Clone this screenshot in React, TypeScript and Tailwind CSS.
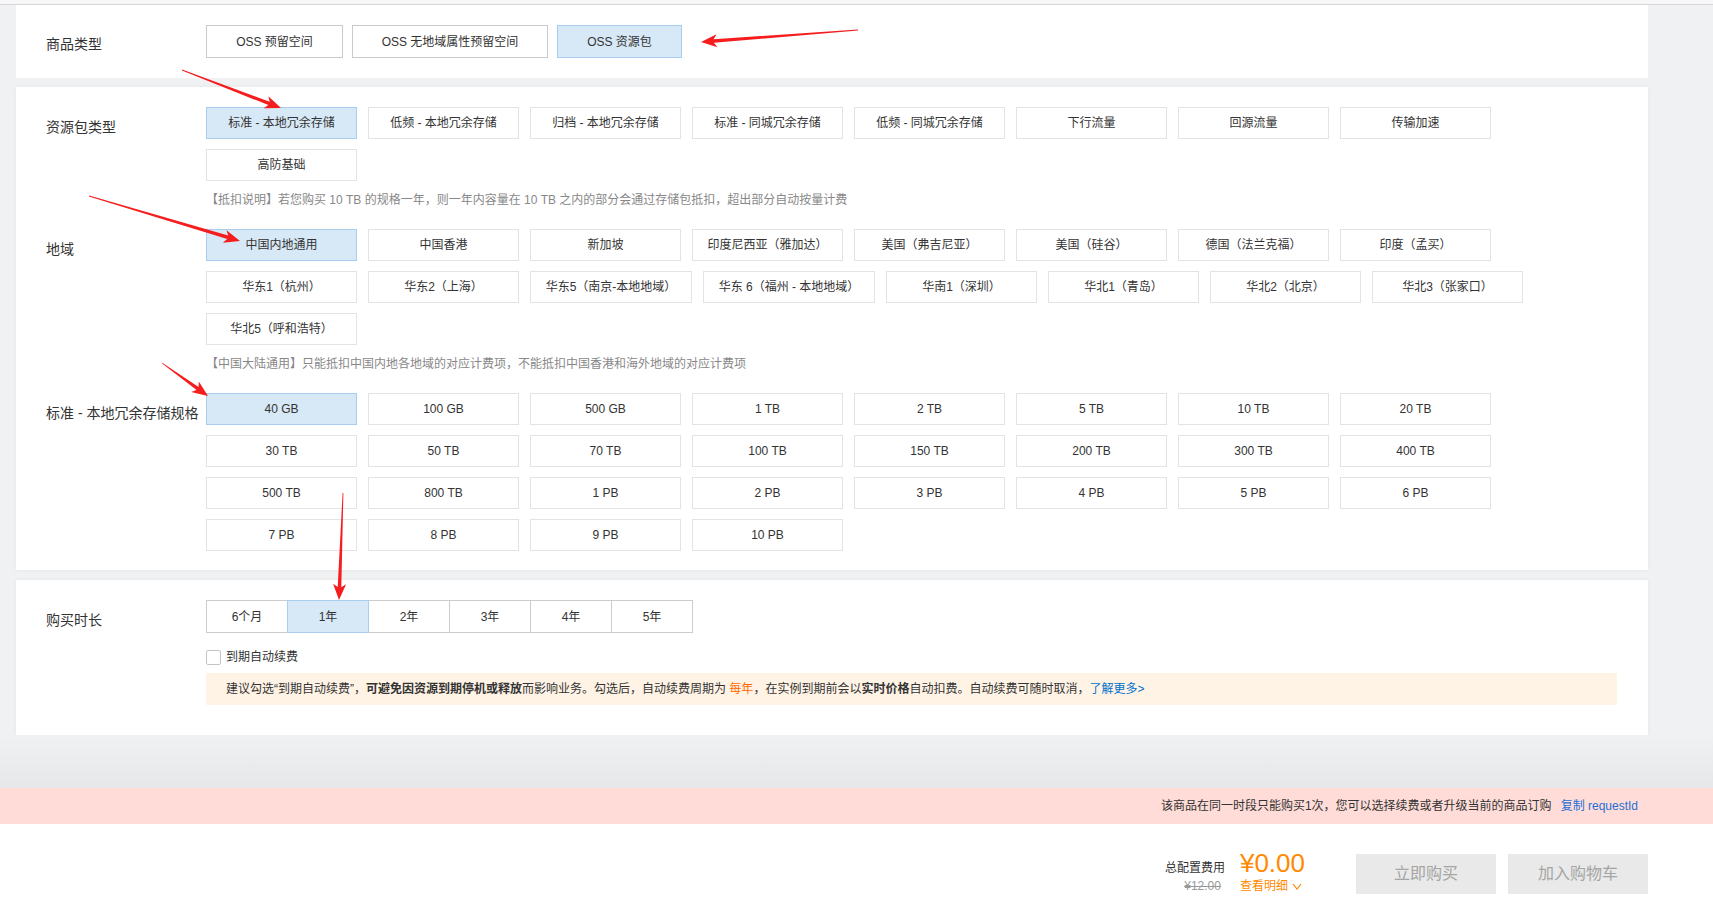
import React from "react";

type Opt = { label: string; w?: string; sel?: boolean };

const resTypes: Opt[] = [
  { label: "标准 - 本地冗余存储", sel: true },
  { label: "低频 - 本地冗余存储" },
  { label: "归档 - 本地冗余存储" },
  { label: "标准 - 同城冗余存储" },
  { label: "低频 - 同城冗余存储" },
  { label: "下行流量" },
  { label: "回源流量" },
  { label: "传输加速" },
  { label: "高防基础" },
];

const regions: Opt[] = [
  { label: "中国内地通用", sel: true },
  { label: "中国香港" },
  { label: "新加坡" },
  { label: "印度尼西亚（雅加达）" },
  { label: "美国（弗吉尼亚）" },
  { label: "美国（硅谷）" },
  { label: "德国（法兰克福）" },
  { label: "印度（孟买）" },
  { label: "华东1（杭州）" },
  { label: "华东2（上海）" },
  { label: "华东5（南京-本地地域）", w: "w-[162px]" },
  { label: "华东 6（福州 - 本地地域）", w: "w-[172px]" },
  { label: "华南1（深圳）" },
  { label: "华北1（青岛）" },
  { label: "华北2（北京）" },
  { label: "华北3（张家口）" },
  { label: "华北5（呼和浩特）" },
];

const specs: Opt[] = [
  "40 GB", "100 GB", "500 GB", "1 TB", "2 TB", "5 TB", "10 TB", "20 TB",
  "30 TB", "50 TB", "70 TB", "100 TB", "150 TB", "200 TB", "300 TB", "400 TB",
  "500 TB", "800 TB", "1 PB", "2 PB", "3 PB", "4 PB", "5 PB", "6 PB",
  "7 PB", "8 PB", "9 PB", "10 PB",
].map((l, i) => ({ label: l, sel: i === 0 }));

const durations = ["6个月", "1年", "2年", "3年", "4年", "5年"];

function OptionButton({ o }: { o: Opt }) {
  return (
    <div
      className={
        "h-[32px] shrink-0 flex items-center justify-center border text-[12px] text-[#333] whitespace-nowrap " +
        (o.w ? o.w : "w-[151px]") +
        " " +
        (o.sel ? "bg-[#d7e8f6] border-[#a8cdee]" : "bg-white border-[#e3e3e3]")
      }
    >
      {o.label}
    </div>
  );
}

function OptionGrid({ items }: { items: Opt[] }) {
  return (
    <div className="flex flex-wrap gap-x-[11px] gap-y-[10px]">
      {items.map((o) => (
        <OptionButton key={o.label} o={o} />
      ))}
    </div>
  );
}

function Label({ children }: { children: React.ReactNode }) {
  return (
    <div className="w-[160px] shrink-0 pt-[10px] text-[14px] leading-[20px] text-[#333] whitespace-nowrap">
      {children}
    </div>
  );
}

function Note({ children }: { children: React.ReactNode }) {
  return <div className="mt-[10px] text-[12px] leading-[18px] text-[#888]">{children}</div>;
}

function arrowPoints(x1: number, y1: number, x2: number, y2: number) {
  const headLen = 16;
  const headW = 6.5;
  const tailW = 0.4;
  const shaftW = 1.8;
  const dx = x2 - x1;
  const dy = y2 - y1;
  const L = Math.hypot(dx, dy);
  const ux = dx / L;
  const uy = dy / L;
  const nx = -uy;
  const ny = ux;
  const bx = x2 - ux * headLen;
  const by = y2 - uy * headLen;
  const ix = x2 - ux * headLen * 0.8;
  const iy = y2 - uy * headLen * 0.8;
  const p = (x: number, y: number) => `${x.toFixed(1)},${y.toFixed(1)}`;
  return [
    p(x1 + nx * tailW, y1 + ny * tailW),
    p(ix + nx * shaftW, iy + ny * shaftW),
    p(bx + nx * headW, by + ny * headW),
    p(x2, y2),
    p(bx - nx * headW, by - ny * headW),
    p(ix - nx * shaftW, iy - ny * shaftW),
    p(x1 - nx * tailW, y1 - ny * tailW),
  ].join(" ");
}

const arrows = [
  [858, 30, 701, 42],
  [182, 70, 281, 108],
  [89, 196, 240, 241],
  [162, 363, 208, 396],
  [343, 493, 339, 600],
];

export default function App() {
  return (
    <div className="relative w-full min-h-[904px] bg-[#f0f1f3] font-['Liberation_Sans','Noto_Sans_CJK_SC',sans-serif] overflow-hidden">
      <div className="h-[5px] bg-[#f7f7f8] border-b border-[#d6d6d8]" />

      {/* 商品类型 */}
      <div className="ml-[16px] w-[1632px] h-[73px] bg-white pl-[30px] pr-[31px] pt-[20px] flex">
        <Label>
          <span className="relative top-[-1px]">商品类型</span>
        </Label>
        <div className="flex gap-x-[9px]">
          <div className="w-[137px] h-[33px] flex items-center justify-center border border-[#cacaca] bg-white text-[12px] text-[#333]">
            OSS 预留空间
          </div>
          <div className="w-[196px] h-[33px] flex items-center justify-center border border-[#cacaca] bg-white text-[12px] text-[#333]">
            OSS 无地域属性预留空间
          </div>
          <div className="w-[125px] h-[33px] flex items-center justify-center border border-[#a8cdee] bg-[#d7e8f6] text-[12px] text-[#333]">
            OSS 资源包
          </div>
        </div>
      </div>

      {/* 资源包 */}
      <div className="mt-[9px] ml-[16px] w-[1632px] h-[483px] bg-white pl-[30px] pr-[31px] pt-[20px] shadow-[0_0_4px_rgba(0,0,0,0.05)]">
        <div className="flex">
          <Label>资源包类型</Label>
          <div className="flex-1">
            <OptionGrid items={resTypes} />
            <Note>【抵扣说明】若您购买 10 TB 的规格一年，则一年内容量在 10 TB 之内的部分会通过存储包抵扣，超出部分自动按量计费</Note>
          </div>
        </div>
        <div className="flex mt-[20px]">
          <Label>地域</Label>
          <div className="flex-1">
            <OptionGrid items={regions} />
            <Note>【中国大陆通用】只能抵扣中国内地各地域的对应计费项，不能抵扣中国香港和海外地域的对应计费项</Note>
          </div>
        </div>
        <div className="flex mt-[20px]">
          <Label>标准 - 本地冗余存储规格</Label>
          <div className="flex-1">
            <OptionGrid items={specs} />
          </div>
        </div>
      </div>

      {/* 购买时长 */}
      <div className="mt-[10px] ml-[16px] w-[1632px] h-[155px] bg-white pl-[30px] pr-[31px] pt-[20px] shadow-[0_0_4px_rgba(0,0,0,0.05)] flex">
        <Label>购买时长</Label>
        <div className="flex-1">
          <div className="flex">
            {durations.map((d, i) => (
              <div
                key={d}
                className={
                  "w-[82px] h-[33px] flex items-center justify-center border text-[12px] text-[#333] " +
                  (i === 0 ? "" : "-ml-px ") +
                  (i === 1 ? "relative z-10 bg-[#d7e8f6] border-[#a8cdee]" : "bg-white border-[#cccccc]")
                }
              >
                {d}
              </div>
            ))}
          </div>
          <div className="mt-[16px] flex items-center h-[16px]">
            <div className="w-[15px] h-[15px] border border-[#c4c4c4] bg-white rounded-[2px]" />
            <span className="ml-[5px] text-[12px] text-[#333]">到期自动续费</span>
          </div>
          <div className="mt-[8px] h-[32px] bg-[#fff3e6] flex items-center pl-[20px] text-[12px] text-[#333] whitespace-nowrap">
            <span>建议勾选“到期自动续费”，</span>
            <span className="font-bold">可避免因资源到期停机或释放</span>
            <span>而影响业务。勾选后，自动续费周期为&nbsp;</span>
            <span className="text-[#ff6a00]">每年</span>
            <span>，在实例到期前会以</span>
            <span className="font-bold">实时价格</span>
            <span>自动扣费。自动续费可随时取消，</span>
            <span className="text-[#0070cc]">了解更多&gt;</span>
          </div>
        </div>
      </div>

      <div className="h-[53px] bg-gradient-to-b from-[#f0f1f3] to-[#e6e7e9]" />

      {/* 提示条 */}
      <div className="h-[36px] bg-[#ffdcd8] flex items-center justify-end pr-[75px] text-[12px]">
        <span className="text-[#333]">该商品在同一时段只能购买1次，您可以选择续费或者升级当前的商品订购</span>
        <span className="ml-[9px] text-[#1f6fd6]">复制 requestId</span>
      </div>

      {/* 底部 */}
      <div className="h-[80px] bg-white flex items-end justify-end pr-[65px] pb-[10px]">
        <div className="grid grid-cols-[auto_auto] gap-x-[15px] items-baseline mr-[51px]">
          <span className="text-[12px] text-[#333] text-right">总配置费用</span>
          <span className="text-[26px] leading-[30px] text-[#ff8a00]">¥0.00</span>
          <span className="text-[12px] leading-[16px] text-[#999] line-through text-right pr-[4px]">¥12.00</span>
          <span className="text-[12px] leading-[16px] text-[#ff8a00] flex items-center gap-[4px]">
            查看明细
            <svg width="10" height="7" viewBox="0 0 10 7" fill="none">
              <path d="M1 1 L5 6 L9 1" stroke="#ff8a00" strokeWidth="1.2" />
            </svg>
          </span>
        </div>
        <div className="flex gap-[12px]">
          <div className="w-[140px] h-[40px] bg-[#e8e9e8] flex items-center justify-center text-[16px] text-[#a5a5a5]">
            立即购买
          </div>
          <div className="w-[140px] h-[40px] bg-[#e8e9e8] flex items-center justify-center text-[16px] text-[#a5a5a5]">
            加入购物车
          </div>
        </div>
      </div>

      {/* 红色标注箭头 */}
      <svg className="absolute top-0 left-0 pointer-events-none" width="1713" height="904" viewBox="0 0 1713 904">
        {arrows.map((a, i) => (
          <polygon key={i} points={arrowPoints(a[0], a[1], a[2], a[3])} fill="#f51d1d" />
        ))}
      </svg>
    </div>
  );
}
